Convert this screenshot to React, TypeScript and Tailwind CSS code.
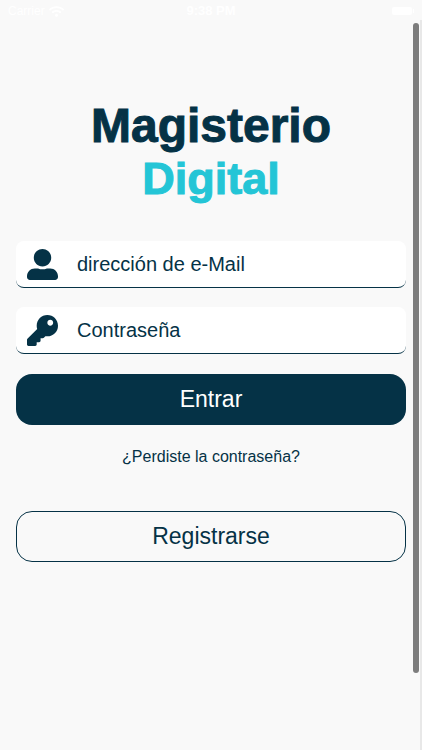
import { useState } from "react"
import { FaKey, FaUserAlt, FaWifi } from "react-icons/fa"
import type { IconType } from "react-icons"

type FieldProps = {
  id: string
  type: string
  label: string
  icon: IconType
  value: string
  onChange: (value: string) => void
}

function Field({ id, type, label, icon: Icon, value, onChange }: FieldProps) {
  return (
    <div className="flex h-[47px] items-center rounded-lg border-b border-[#053246] bg-white pl-[11px]">
      <label htmlFor={id} aria-label={label} className="shrink-0">
        <Icon size={31} />
      </label>
      <input
        id={id}
        type={type}
        placeholder={label}
        value={value}
        onChange={(e) => onChange(e.target.value)}
        className="ml-[19px] min-w-0 flex-1 bg-transparent text-xl outline-none placeholder:text-[#053246]"
      />
    </div>
  )
}

function StatusBar() {
  return (
    <div className="grid h-[22px] grid-cols-3 items-center px-2 text-xs text-white">
      <div className="flex items-center gap-1">
        <span>Carrier</span>
        <FaWifi size={15} />
      </div>
      <span className="text-center text-[13px] font-bold">9:38 PM</span>
      <div className="flex items-center justify-end">
        <span className="h-2 w-5 rounded-xs bg-white" />
        <span className="ml-px h-1 w-px bg-white" />
      </div>
    </div>
  )
}

export default function App() {
  const [email, setEmail] = useState("")
  const [password, setPassword] = useState("")

  return (
    <div className="relative min-h-screen bg-[#f9f9f9] font-['Liberation_Sans',Arial,sans-serif] text-[#053246]">
      <StatusBar />

      <main className="px-4 pt-[77px]">
        <h1 className="text-center leading-[53px] font-bold [-webkit-text-stroke:1px_currentColor]">
          <span className="block text-[48px]">Magisterio</span>
          <span className="block text-[45px] text-[#24c5d6]">Digital</span>
        </h1>

        <form onSubmit={(e) => e.preventDefault()} className="mt-9 flex flex-col">
          <div className="flex flex-col gap-[19px]">
            <Field
              id="email"
              type="email"
              label="dirección de e-Mail"
              icon={FaUserAlt}
              value={email}
              onChange={setEmail}
            />
            <Field
              id="password"
              type="password"
              label="Contraseña"
              icon={FaKey}
              value={password}
              onChange={setPassword}
            />
          </div>

          <button
            type="submit"
            className="mt-5 h-[51px] rounded-2xl bg-[#053246] text-[23px] font-light text-white"
          >
            Entrar
          </button>

          <a href="#" className="mt-5 self-center text-base font-light">
            ¿Perdiste la contraseña?
          </a>

          <button
            type="button"
            className="mt-[42px] h-[51px] rounded-2xl border border-[#053246] text-[23px] font-light"
          >
            Registrarse
          </button>
        </form>
      </main>

      {/* scroll indicator */}
      <div className="absolute top-5 right-0 bottom-0 w-0.5 bg-[#e8e8e8]" />
      <div className="absolute top-[23px] right-[3px] bottom-[77px] w-[6px] rounded-full bg-[#7d7d7d]" />
    </div>
  )
}
